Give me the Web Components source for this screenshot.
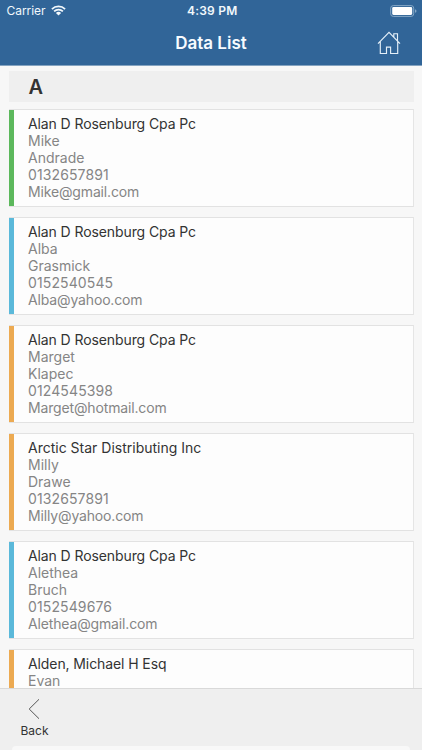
<!DOCTYPE html>
<html lang="en">
<head>
<meta charset="utf-8">
<title>Data List</title>
<style>
html, body { margin: 0; height: 100%; overflow: hidden; }
body { font-family: Inter, "Liberation Sans", sans-serif; background: #f7f7f7; }
</style>
</head>
<body>
<data-app></data-app>
<script>
const define = (name, html) => {
  const t = document.createElement('template');
  t.innerHTML = html;
  customElements.define(name, class extends HTMLElement {
    constructor() {
      super();
      this.attachShadow({ mode: 'open' }).append(t.content.cloneNode(true));
    }
  });
};

define('status-bar', `
<style>
:host { display: grid; grid-template-columns: 1fr auto 1fr; align-items: center; height: 22px; padding: 0 5px 0 6.5px; color: #f2f8fc; font-size: 12px; line-height: 22px; box-sizing: border-box; }
.left { display: flex; align-items: center; gap: 6px; }
.left svg { margin-top: -1px; }
.left span { letter-spacing: -.05px; width: 38.5px; }
.time { font-weight: 600; font-size: 12px; letter-spacing: .2px; padding-left: 1px; }
.right { display: flex; justify-content: flex-end; }
svg { display: block; }
</style>
<div class="left"><span>Carrier</span>
<svg width="15" height="11" viewBox="0 0 15 11" fill="none" stroke="#f2f8fc"><path d="M.9 4.1a9.3 9.3 0 0 1 13.2 0M3.1 6.4a6.2 6.2 0 0 1 8.8 0" stroke-width="1.7"/><path d="M7.5 10.6 4.9 8a3.7 3.7 0 0 1 5.2 0Z" fill="#f2f8fc" stroke="none"/></svg></div>
<div class="time">4:39 PM</div>
<div class="right"><svg width="27" height="12" viewBox="0 0 27 12"><rect x=".7" y=".6" width="23" height="10.8" rx="2.6" fill="none" stroke="#86a8c7"/><rect x="2.2" y="2.1" width="20" height="7.8" rx="1.3" fill="#fff"/><path d="M25 4.2q1.5.4 1.5 1.8T25 7.8Z" fill="#86a8c7"/></svg></div>
`);

define('home-icon', `
<style>:host { display: block; } svg { display: block; margin-top: -2px; }</style>
<svg width="24" height="24" viewBox="0 0 24 24" fill="none" stroke="#e4eff8" stroke-width="1.15"><path d="M1 12.6 12 1.3l11 11.3M3.3 10.4v12.1h6.2v-6.4h4.1v6.4h7.1V10.4M16.8 6V2.7h3.7v7.1"/></svg>
`);

define('nav-bar', `
<style>
:host { display: grid; grid-template-columns: 1fr auto 1fr; align-items: center; height: 43px; padding: 0 21px; color: #f7fbff; border-bottom: 1px solid #84a3c0; }
.title { font-size: 17px; font-weight: 600; line-height: 22px; letter-spacing: 0; padding-bottom: 1px; }
.right { justify-self: end; }
</style>
<span></span><span class="title"><slot></slot></span><span class="right"><slot name="action"></slot></span>
`);

define('section-header', `
<style>:host { display: block; height: 31px; box-sizing: border-box; padding-left: 19.5px; background: #efefef; color: #333; font-size: 20px; font-weight: 600; line-height: 33px; margin-bottom: 7px; }</style>
<slot></slot>
`);

define('contact-card', `
<style>
:host { display: block; box-sizing: border-box; height: 98px; margin-bottom: 10px; border: 1px solid #e2e2e2; border-right: 1.5px solid #e5e5e5; border-left: 0; background: linear-gradient(to right, var(--tag) 5px, #fdfdfd 5px); padding: 5px 0 0 19px; color: #858585; font-size: 14px; line-height: 17px; white-space: nowrap; letter-spacing: 0; }
.name { color: #333; letter-spacing: var(--name-spacing, -.1px); }
.tel { letter-spacing: .12px; }
.mail { letter-spacing: -.15px; }
div { height: 17px; }
</style>
<div class="name"><slot name="name"></slot></div>
<div><slot name="first"></slot></div>
<div><slot name="last"></slot></div>
<div class="tel"><slot name="phone"></slot></div>
<div class="mail"><slot name="mail"></slot></div>
`);

define('back-button', `
<style>
:host { display: flex; flex-direction: column; align-items: center; width: 28px; color: #333; font-size: 12px; line-height: 16px; }
svg { display: block; margin: 0 2px 3px 0; }
</style>
<svg width="12" height="22" viewBox="0 0 12 22" fill="none" stroke="#555" stroke-width="1"><path d="M11 1.3 1.2 11l9.8 9.7"/></svg>
<span><slot></slot></span>
`);

define('tool-bar', `
<style>
:host { display: flex; flex-direction: column; justify-content: space-between; height: 62.5px; box-sizing: border-box; border-top: 1px solid #d9d9d9; background: #efefef; }
.items { padding: 9px 20.5px 0; }
.sheet { height: 4px; margin: 0 12px 0 12px; border-radius: 10px 10px 0 0; background: #f8f8f8; }
</style>
<div class="items"><slot></slot></div><div class="sheet"></div>
`);

const contacts = [
  ['#5cb85c', 'Alan D Rosenburg Cpa Pc', 'Mike', 'Andrade', '0132657891', 'Mike@gmail.com'],
  ['#5bb9da', 'Alan D Rosenburg Cpa Pc', 'Alba', 'Grasmick', '0152540545', 'Alba@yahoo.com'],
  ['#ecaa52', 'Alan D Rosenburg Cpa Pc', 'Marget', 'Klapec', '0124545398', 'Marget@hotmail.com'],
  ['#ecaa52;--name-spacing:0px', 'Arctic Star Distributing Inc', 'Milly', 'Drawe', '0132657891', 'Milly@yahoo.com'],
  ['#5bb9da', 'Alan D Rosenburg Cpa Pc', 'Alethea', 'Bruch', '0152549676', 'Alethea@gmail.com'],
  ['#ecaa52', 'Alden, Michael H Esq', 'Evan', '', '', '']
];
const fields = ['name', 'first', 'last', 'phone', 'mail'];
const cards = contacts.map(([color, ...values]) =>
  `<contact-card style="--tag:${color}">${values.map((v, i) => v ? `<span slot="${fields[i]}">${v}</span>` : '').join('')}</contact-card>`).join('');

define('data-app', `
<style>
:host { display: flex; flex-direction: column; height: 750px; width: 422px; overflow: hidden; }
header { flex: none; background: #316598; height: 66px; }
main { flex: 1; min-height: 0; overflow: hidden; padding: 5px 8.5px 0 9px; }
tool-bar { flex: none; }
</style>
<header><status-bar></status-bar><nav-bar>Data List<home-icon slot="action"></home-icon></nav-bar></header>
<main><section-header>A</section-header>${cards}</main>
<tool-bar><back-button>Back</back-button></tool-bar>
`);
</script>
</body>
</html>
